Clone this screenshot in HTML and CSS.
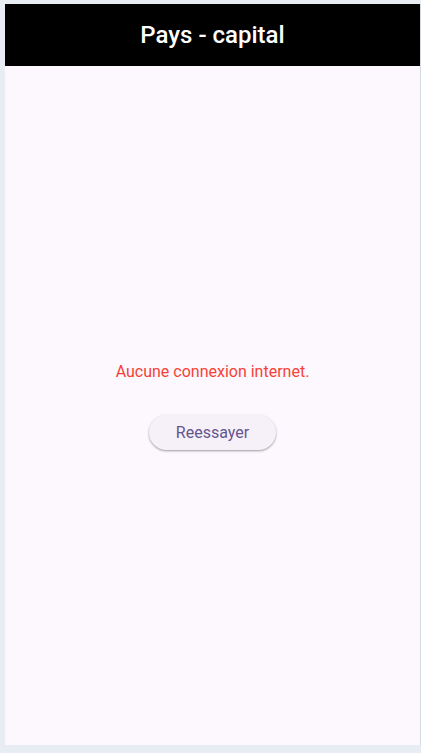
FILE: index.html
```html
<!DOCTYPE html>
<html lang="fr">
<head>
<meta charset="utf-8">
<title>Pays - capital</title>
<link rel="stylesheet" href="styles.css">
</head>
<body>
<div class="frame">
  <header class="appbar"><h1 class="title">Pays - capital</h1></header>
  <main class="content">
    <p class="error">Aucune connexion internet.</p>
    <button class="retry" type="button">Reessayer</button>
  </main>
</div>
</body>
</html>
```
FILE: styles.css
```css
html, body {
  margin: 0;
  padding: 0;
  height: 100%;
}
body {
  background: #e8edf3;
  font-family: Roboto, "Noto Sans", sans-serif;
}
.frame {
  margin: 4px 0 0 5px;
  width: 415px;
  height: 741px;
  border-right: 1px solid #d6dbe2;
  background: #fdf7fe;
  display: flex;
  flex-direction: column;
}
.appbar {
  height: 62px;
  background: #000;
  display: flex;
  align-items: center;
  justify-content: center;
  flex: none;
}
.title {
  margin: 0;
  color: #fff;
  font-size: 24px;
  font-weight: 500;
  line-height: 28px;
  letter-spacing: 0;
}
.content {
  flex: 1;
  display: flex;
  flex-direction: column;
  align-items: center;
  justify-content: center;
}
.error {
  margin: 0;
  color: #f44336;
  font-size: 16px;
  line-height: 20px;
}
.retry {
  margin-top: 33px;
  height: 35px;
  padding: 0 27px;
  border: none;
  border-radius: 18px;
  background: #f6f1f9;
  color: #65558f;
  font-family: Roboto, "Noto Sans", sans-serif;
  font-size: 16px;
  font-weight: 400;
  box-shadow: 0 1px 2px rgba(0,0,0,0.28), 0 1px 3px rgba(0,0,0,0.12);
}
```
